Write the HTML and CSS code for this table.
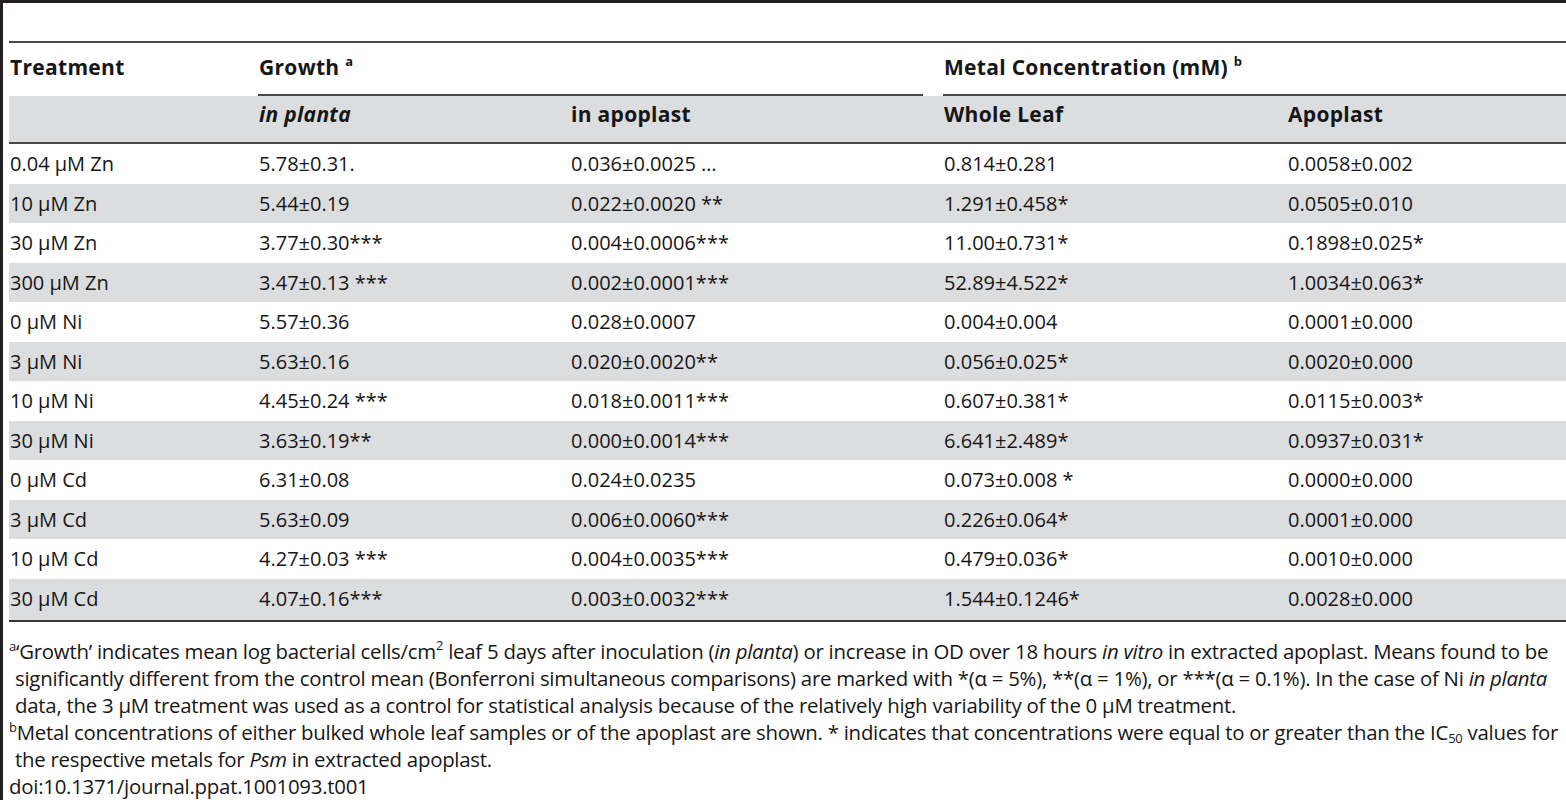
FILE: index.html
```html
<!DOCTYPE html>
<html>
<head>
  <meta charset="utf-8">
  <link rel="stylesheet" href="styles.css">
</head>
<body>
  <div class="page">
    <table class="data">
      <colgroup>
        <col class="c-treat">
        <col class="c-planta">
        <col class="c-apo">
        <col class="c-leaf">
        <col class="c-metal-apo">
      </colgroup>
      <thead>
        <tr class="head">
          <th>Treatment</th>
          <th colspan="2"><div class="span-head">Growth <sup>a</sup></div></th>
          <th colspan="2"><div class="span-head last">Metal Concentration (mM) <sup>b</sup></div></th>
        </tr>
        <tr class="sub">
          <th></th>
          <th><em>in planta</em></th>
          <th>in apoplast</th>
          <th>Whole Leaf</th>
          <th>Apoplast</th>
        </tr>
      </thead>
      <tbody>
        <tr><td>0.04 μM Zn</td><td>5.78±0.31.</td><td>0.036±0.0025 …</td><td>0.814±0.281</td><td>0.0058±0.002</td></tr>
        <tr><td>10 μM Zn</td><td>5.44±0.19</td><td>0.022±0.0020 **</td><td>1.291±0.458*</td><td>0.0505±0.010</td></tr>
        <tr><td>30 μM Zn</td><td>3.77±0.30***</td><td>0.004±0.0006***</td><td>11.00±0.731*</td><td>0.1898±0.025*</td></tr>
        <tr><td>300 μM Zn</td><td>3.47±0.13 ***</td><td>0.002±0.0001***</td><td>52.89±4.522*</td><td>1.0034±0.063*</td></tr>
        <tr><td>0 μM Ni</td><td>5.57±0.36</td><td>0.028±0.0007</td><td>0.004±0.004</td><td>0.0001±0.000</td></tr>
        <tr><td>3 μM Ni</td><td>5.63±0.16</td><td>0.020±0.0020**</td><td>0.056±0.025*</td><td>0.0020±0.000</td></tr>
        <tr><td>10 μM Ni</td><td>4.45±0.24 ***</td><td>0.018±0.0011***</td><td>0.607±0.381*</td><td>0.0115±0.003*</td></tr>
        <tr><td>30 μM Ni</td><td>3.63±0.19**</td><td>0.000±0.0014***</td><td>6.641±2.489*</td><td>0.0937±0.031*</td></tr>
        <tr><td>0 μM Cd</td><td>6.31±0.08</td><td>0.024±0.0235</td><td>0.073±0.008 *</td><td>0.0000±0.000</td></tr>
        <tr><td>3 μM Cd</td><td>5.63±0.09</td><td>0.006±0.0060***</td><td>0.226±0.064*</td><td>0.0001±0.000</td></tr>
        <tr><td>10 μM Cd</td><td>4.27±0.03 ***</td><td>0.004±0.0035***</td><td>0.479±0.036*</td><td>0.0010±0.000</td></tr>
        <tr><td>30 μM Cd</td><td>4.07±0.16***</td><td>0.003±0.0032***</td><td>1.544±0.1246*</td><td>0.0028±0.000</td></tr>
      </tbody>
    </table>

    <div class="notes">
      <p class="note"><sup>a</sup>‘Growth’ indicates mean log bacterial cells/cm<sup class="up">2</sup> leaf 5 days after inoculation (<i>in planta</i>) or increase in OD over 18 hours <i>in vitro</i> in extracted apoplast. Means found to be<br>significantly different from the control mean (Bonferroni simultaneous comparisons) are marked with *(α = 5%), **(α = 1%), or ***(α = 0.1%). In the case of Ni <i>in planta</i><br>data, the 3 μM treatment was used as a control for statistical analysis because of the relatively high variability of the 0 μM treatment.</p>
      <p class="note"><sup>b</sup>Metal concentrations of either bulked whole leaf samples or of the apoplast are shown. * indicates that concentrations were equal to or greater than the IC<sub>50</sub> values for<br>the respective metals for <i>Psm</i> in extracted apoplast.</p>
      <p class="doi">doi:10.1371/journal.ppat.1001093.t001</p>
    </div>
  </div>
</body>
</html>
```

FILE: styles.css
```css
body {
  margin: 0;
  background: #fff;
  color: #161616;
  font-family: "Open Sans", "Liberation Sans", sans-serif;
}

/* dark frame on the top and left edge */
.page {
  border-top: 3px solid #231f20;
  border-left: 3px solid #231f20;
  min-height: 797px;
  padding: 38px 0 0 6px;
  box-sizing: border-box;
}

.data {
  width: 1557px;
  border-collapse: collapse;
  border-top: 2px solid #4a4a4a;
  border-bottom: 2px solid #3a3a3a;
  font-size: 20px;
  line-height: 27px;
}

.c-treat { width: 249px; }
.c-planta { width: 312px; }
.c-apo { width: 373px; }
.c-leaf { width: 344px; }

th, td {
  padding: 0 0 0 1px;
  text-align: left;
  white-space: nowrap;
}

th {
  font-weight: 700;
  font-size: 21px;
  letter-spacing: 0.3px;
}

/* first header row */
.head th {
  padding-top: 11px;
  vertical-align: top;
  height: 51px;
  box-sizing: border-box;
}

.head th:first-child {
  padding-bottom: 13px;
}

.span-head {
  margin-right: 20px;
  margin-left: -1px;
  padding-left: 1px;
  padding-bottom: 13px;
  border-bottom: 2px solid #4a4a4a;
}

.span-head.last {
  margin-right: 0;
}

.head sup {
  font-size: 13px;
  vertical-align: 9px;
  line-height: 0;
}

/* second header row */
.sub th {
  background: #dcdddf;
  padding-top: 5px;
  padding-bottom: 14px;
  border-bottom: 2px solid #4a4a4a;
}

.sub em {
  font-style: italic;
}

tbody td {
  padding-top: 6px;
  padding-bottom: 6.5px;
}

tbody tr:nth-child(even) td {
  background: #dcdddf;
}

tbody tr:last-child td {
  padding-bottom: 8px;
}

/* footnotes */
.notes {
  margin-top: 16px;
  font-size: 20.4px;
  line-height: 27px;
  letter-spacing: -0.25px;
  white-space: nowrap;
}

.note {
  margin: 0;
  padding-left: 6px;
  text-indent: -6px;
}

.note sup {
  font-size: 13px;
  line-height: 0;
  vertical-align: 8px;
}

.note sup.up {
  vertical-align: 9px;
}

.note sub {
  font-size: 13px;
  line-height: 0;
  vertical-align: -3px;
}

.doi {
  margin: 0;
}
```
